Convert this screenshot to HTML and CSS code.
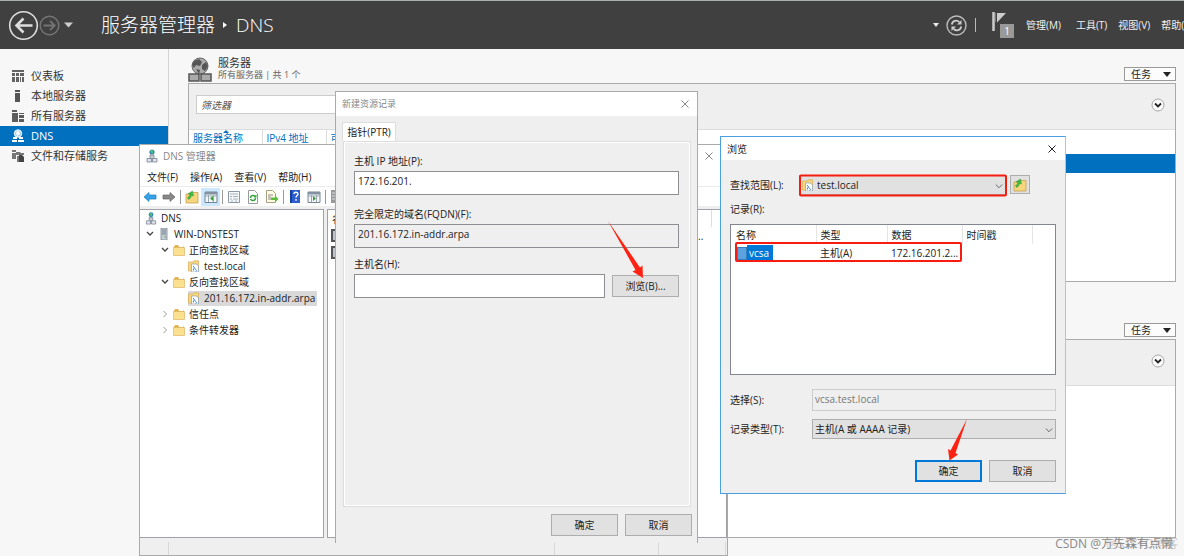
FILE: index.html
```html
<!DOCTYPE html>
<html lang="zh-CN">
<head>
<meta charset="utf-8">
<title>服务器管理器 - DNS</title>
<link rel="stylesheet" href="styles.css">
</head>
<body>
<svg class="defs" aria-hidden="true">
  <defs>
    <symbol id="folder" viewBox="0 0 12 12"><path d="M1 2.5V11h10V2.5H6L5 1H2z" fill="#e2b454"/><path d="M0.5 3.500H11.5V11.5H0.5z" fill="#fbe08f" stroke="#dcb566" stroke-width=".7"/><path d="M6 2.5h4" stroke="#fff" /></symbol>
    <symbol id="zone" viewBox="0 0 12 12"><path d="M.5 2H5L6 .8h4.500V11H.5z" fill="#f6d77f" stroke="#d5ac57" stroke-width=".7"/><path d="M3.500 4h5l2 2v6h-7z" fill="#fff" stroke="#8a9db0" stroke-width=".7"/><path d="M5 6.500c2 0 1 2 2 2.500s2 1 1 2.500M5.500 8.500v2" fill="none" stroke="#3c86cc" stroke-width="1"/></symbol>
    <symbol id="dns" viewBox="0 0 12 14"><circle cx="6" cy="3" r="2.600" fill="#3589b8"/><path d="M4.200 2.200c1-2 3-1 2.600 0s1 1.800-.4 2.600z" fill="#55c56b"/><path d="M4 6h4v3.500H4z" fill="#c9ced6" stroke="#788391" stroke-width=".8"/><path d="M1 9.500h4.500V13H1zM6.500 9.500H11V13H6.500z" fill="#dfe3e9" stroke="#758294" stroke-width=".8"/></symbol>
    <symbol id="up" viewBox="0 0 14 14"><path d="M1 4h6l1-1.500h5V13H1z" fill="#f5d67d" stroke="#c99e4c" stroke-width=".8"/><path d="M3.500 9.500C5 9 6 7.500 6.500 5.500L8.500 6 7.500 1 3 3.800l1.800.6C4.500 6 3.500 7 2.500 7.500z" fill="#42b844" stroke="#278d2b" stroke-width=".4"/></symbol>
    <symbol id="pane" viewBox="0 0 14 14"><path d="M1 2h12v10.500H1z" fill="#f4f7f9" stroke="#758593"/><path d="M1 2h12v2.500H1z" fill="#8292a1"/><path d="M4.500 5v7M9.500 5v7M1 6h12" stroke="#9ba7b2"/></symbol>
    <symbol id="close" viewBox="0 0 10 10"><path d="M1.500 1.500l7 7m0-7l-7 7" stroke="currentColor" fill="none"/></symbol>
    <symbol id="open" viewBox="0 0 8 8"><path d="M1 2l3 3 3-3" stroke="#444" stroke-width="1.300" fill="none"/></symbol>
    <symbol id="drop" viewBox="0 0 8 8"><path d="M.8 2.500L4 5.700l3.200-3.200" stroke="#666" fill="none"/></symbol>
    <symbol id="shut" viewBox="0 0 8 8"><path d="M2.500 1l3 3-3 3" stroke="#999" fill="none"/></symbol>
    <symbol id="round" viewBox="0 0 14 14"><circle cx="7" cy="7" r="6" fill="#fcfcfc" stroke="#929292" stroke-width=".8"/><path d="M4 5.500l3 3 3-3" stroke="#222" stroke-width="1.800" fill="none"/></symbol>
  </defs>
</svg>

<header class="topbar">
  <button class="plain" aria-label="后退"><svg width="31" height="31" viewBox="0 0 31 31"><circle cx="15.500" cy="15.500" r="13.800" fill="none" stroke="#ddd" stroke-width="1.600"/><path d="M24.500 15.500H8.500M15.500 8.500l-7 7 7 7" fill="none" stroke="#ddd" stroke-width="2.600"/></svg></button>
  <button class="plain" aria-label="前进"><svg width="21" height="21" viewBox="0 0 21 21"><circle cx="10.500" cy="10.500" r="9.300" fill="none" stroke="#747474" stroke-width="1.500"/><path d="M4.500 10.500H15M11 5.800l4.700 4.700-4.700 4.700" fill="none" stroke="#747474" stroke-width="1.800"/></svg></button>
  <button class="plain history" aria-label="历史"><svg width="9" height="6" viewBox="0 0 9 6"><path d="M0 .5h9L4.500 5.500z" fill="#ccc"/></svg></button>
  <h1>服务器管理器<svg width="5" height="8" viewBox="0 0 5 8"><path d="M0 1l4 3-4 3z" fill="#fff"/></svg>DNS</h1>
  <div class="tools">
    <svg width="6" height="4" viewBox="0 0 6 4"><path d="M0 0h6L3 4z" fill="#eee"/></svg>
    <button class="plain refresh" aria-label="刷新"><svg width="21" height="21" viewBox="0 0 21 21"><circle cx="10.500" cy="10.500" r="9.500" fill="none" stroke="#bbb" stroke-width="1.400"/><path d="M5.800 9.500c.7-4 5-5 7.500-2.500M15.200 11.500c-.7 4-5 5-7.500 2.500" fill="none" stroke="#ccc" stroke-width="1.800"/><path d="M15.500 5v4.500H11zM5.500 16v-4.500H10z" fill="#ccc"/></svg></button>
    <i class="rule"></i>
    <button class="plain flag" aria-label="通知"><svg width="15" height="20" viewBox="0 0 15 20"><path d="M1.500 0v19" stroke="#ccc" stroke-width="2.500"/><path d="M3 1h11L5 10.500V1" fill="#ccc"/><path d="M3.500 1v9" stroke="#777"/></svg><b>1</b></button>
    <button class="plain m1">管理(M)</button><button class="plain m2">工具(T)</button><button class="plain m3">视图(V)</button><button class="plain m3">帮助(H)</button>
  </div>
</header>

<div class="app">
  <nav class="sidebar">
    <a href="#"><svg width="14" height="14" viewBox="0 0 14 14"><path d="M1 1h12v2H1zM1 4h3v3H1zM5 4h3v3H5zM9 4h4v3H9zM1 8h3v5H1zM5 8h3v5H5zM9 8h1v5H9zM11 8h2v5h-2z" fill="#636363"/></svg>仪表板</a>
    <a href="#"><svg width="14" height="14" viewBox="0 0 14 14"><path d="M4 1h5v2H4zM4 4h5v9H4z" fill="#555"/></svg>本地服务器</a>
    <a href="#"><svg width="14" height="14" viewBox="0 0 14 14"><path d="M1 1h5v2H1zM1 4h6v9H1zM8 4h5v1H8zM8 6h5v3H8zM8 10h5v3H8z" fill="#5d5d5d"/></svg>所有服务器</a>
    <a href="#" class="on"><svg width="14" height="14" viewBox="0 0 14 14"><circle cx="7" cy="4.500" r="3.700" fill="#a8d0ee" stroke="#fff"/><path d="M5 3l3-1 1 3-3 2zM2 8h4v2H2zM8 8h4v2H8zM1 11h5v2H1zM7 11h6v2H7z" fill="#fff"/></svg>DNS</a>
    <a href="#"><svg width="14" height="14" viewBox="0 0 14 14"><path d="M1 1h4v2H1zM1 4h4v6H1zM5 3h4l1 1h3v2H5zM6 7h3v6H6z" fill="#777"/><path d="M8 6h3l2 2v5H8z" fill="#444"/></svg>文件和存储服务</a>
  </nav>
  <main class="main">
    <section class="tile">
      <div class="tile-head">
        <svg width="24" height="26" viewBox="0 0 24 26"><circle cx="12" cy="9" r="8" fill="#aaa" stroke="#666"/><path d="M6 4l5-2 3 3-2 4-4-1-2 3-2-3zM14 8l4-3 2 4-3 5-3-2zM8 12l4 1-1 4z" fill="#555"/><path d="M1 17h10v7H1zM13 17h10v7H13z" fill="#aaa" stroke="#555" stroke-width="1.500"/></svg>
        <div class="tile-title"><h2>服务器</h2><p>所有服务器 | 共 1 个</p></div>
        <button class="task">任务<svg width="8" height="5" viewBox="0 0 8 5"><path d="M0 0h8L4 5z" fill="#222"/></svg></button>
      </div>
      <div class="box">
        <div class="filter"><input type="text" placeholder="筛选器" aria-label="筛选器"><button class="plain" aria-label="展开"><svg width="14" height="14"><use href="#round"/></svg></button></div>
        <table class="servers">
          <thead><tr><th>服务器名称<svg width="6" height="3" viewBox="0 0 6 3"><path d="M0 3h6L3 0z" fill="#0070bf"/></svg></th><th>IPv4 地址</th><th>可</th></tr></thead>
          <tbody><tr><td colspan="3"></td></tr></tbody>
        </table>
      </div>
    </section>
    <section class="tile second">
      <div class="tile-head"><button class="task">任务<svg width="8" height="5" viewBox="0 0 8 5"><path d="M0 0h8L4 5z" fill="#222"/></svg></button></div>
      <div class="box"><div class="filter"><button class="plain" aria-label="展开"><svg width="14" height="14"><use href="#round"/></svg></button></div></div>
    </section>
  </main>
</div>

<section class="win manager">
  <div class="caption"><svg width="12" height="14"><use href="#dns"/></svg><span>DNS 管理器</span><button class="plain x" aria-label="关闭"><svg width="10" height="10"><use href="#close"/></svg></button></div>
  <div class="menu"><button class="plain">文件(F)</button><button class="plain">操作(A)</button><button class="plain">查看(V)</button><button class="plain">帮助(H)</button></div>
  <div class="toolbar">
    <button class="plain" aria-label="后退"><svg width="14" height="14" viewBox="0 0 14 14"><path d="M1 7l5-4.500V5h7v4H6v2.500z" fill="#35a3e8" stroke="#2479b5" stroke-width=".7"/></svg></button>
    <button class="plain" aria-label="前进"><svg width="14" height="14" viewBox="0 0 14 14"><path d="M13 7L8 2.500V5H1v4h7v2.500z" fill="#888" stroke="#666" stroke-width=".7"/></svg></button>
    <i></i>
    <button class="plain" aria-label="向上"><svg width="14" height="14"><use href="#up"/></svg></button>
    <button class="plain active" aria-label="显示树"><svg width="14" height="14"><use href="#pane"/><path d="M9 6v5L6 8.500z" fill="#3a9b3a"/></svg></button>
    <i></i>
    <button class="plain" aria-label="属性"><svg width="14" height="14" viewBox="0 0 14 14"><path d="M1.500 1.500h11v11h-11z" fill="#f8f8f8" stroke="#8b98a5"/><path d="M3 4h8M3 6.500h2m1 0h5M3 9h2m1 0h5M4 11h2m2 0h2" stroke="#a3b0bd"/></svg></button>
    <button class="plain" aria-label="刷新"><svg width="14" height="14" viewBox="0 0 14 14"><path d="M2.500.5h6l3 3v10h-9z" fill="#fff" stroke="#9a9a9a"/><path d="M4.500 8c0-3 4-3.500 5-1M9.500 8c0 3-4 3.500-5 1" fill="none" stroke="#34a23a" stroke-width="1.500"/><path d="M10.500 4.500v3H7.500z" fill="#34a23a"/></svg></button>
    <button class="plain" aria-label="导出"><svg width="14" height="14" viewBox="0 0 14 14"><path d="M1.500.5h6l3 3v9h-9z" fill="#fffbe3" stroke="#a4a080"/><path d="M3 5h5M3 7h3M3 9h3" stroke="#8a8a8a"/><path d="M6 7.500h4V5.500L13.500 9 10 12.500V10H6z" fill="#5abe3a"/></svg></button>
    <i></i>
    <button class="plain" aria-label="帮助"><svg width="12" height="13" viewBox="0 0 12 13"><path d="M1 0h10v13H1z" fill="#2c5ed0"/><path d="M1 0h2v13H1z" fill="#173f9a"/><path d="M5 4c0-2.500 4-2 4 0 0 1.500-2 1.500-2 3.500M7 9v1.700" stroke="#fff" stroke-width="1.400" fill="none"/></svg></button>
    <button class="plain" aria-label="操作窗格"><svg width="14" height="14"><use href="#pane"/><path d="M6 6v5l3-2.500z" fill="#3a9b3a"/></svg></button>
    <i></i>
    <button class="plain end" aria-label="服务器"><svg width="6" height="13" viewBox="0 0 6 13"><path d="M0 0h6v13H0z" fill="#999"/><path d="M1 3h4M1 6h4M1 9h4" stroke="#ddd"/></svg></button>
  </div>
  <div class="panes">
    <ul class="tree">
      <li class="l0"><svg width="12" height="13"><use href="#dns"/></svg>DNS</li>
      <li class="l1"><svg width="8" height="8"><use href="#open"/></svg><svg width="12" height="12" viewBox="0 0 12 12"><path d="M3 0h6v12H3z" fill="#c5ccd2" stroke="#7a8790" stroke-width=".8"/><path d="M4 2h4M4 4h4M4 6h4" stroke="#71808d"/><path d="M6.500 9h1.500" stroke="#49a253"/></svg>WIN-DNSTEST</li>
      <li class="l2"><svg width="8" height="8"><use href="#open"/></svg><svg width="12" height="12"><use href="#folder"/></svg>正向查找区域</li>
      <li class="l3"><svg width="12" height="12"><use href="#zone"/></svg>test.local</li>
      <li class="l2"><svg width="8" height="8"><use href="#open"/></svg><svg width="12" height="12"><use href="#folder"/></svg>反向查找区域</li>
      <li class="l3"><span class="sel"><svg width="12" height="12"><use href="#zone"/></svg>201.16.172.in-addr.arpa</span></li>
      <li class="l2"><svg width="8" height="8"><use href="#shut"/></svg><svg width="12" height="12"><use href="#folder"/></svg>信任点</li>
      <li class="l2"><svg width="8" height="8"><use href="#shut"/></svg><svg width="12" height="12"><use href="#folder"/></svg>条件转发器</li>
    </ul>
    <div class="list">
      <table><thead><tr><th>名称</th><th class="last"></th><th></th></tr></thead>
      <tbody><tr><td><i></i></td><td>..</td><td></td></tr><tr><td><i></i></td><td></td><td></td></tr></tbody></table>
    </div>
  </div>
  <div class="status"><i></i><i></i><i></i><i></i></div>
</section>

<section class="win record">
  <div class="caption"><span>新建资源记录</span><button class="plain x" aria-label="关闭"><svg width="10" height="10"><use href="#close"/></svg></button></div>
  <button class="tab">指针(PTR)</button>
  <form class="page">
    <label for="ip">主机 IP 地址(P):</label>
    <input id="ip" type="text" value="172.16.201.">
    <label for="fqdn">完全限定的域名(FQDN)(F):</label>
    <input id="fqdn" type="text" value="201.16.172.in-addr.arpa" readonly>
    <label for="host">主机名(H):</label>
    <div class="pick"><input id="host" type="text"><button type="button" class="btn">浏览(B)...</button></div>
  </form>
  <div class="actions"><button class="btn">确定</button><button class="btn">取消</button></div>
</section>

<section class="win browse">
  <div class="caption"><span>浏览</span><button class="plain x" aria-label="关闭"><svg width="10" height="10"><use href="#close"/></svg></button></div>
  <div class="body">
    <div class="scope">
      <label for="scope">查找范围(L):</label>
      <div class="combo icon"><svg class="lead" width="12" height="12"><use href="#zone"/></svg><select id="scope"><option>test.local</option></select><svg class="arrow" width="8" height="8"><use href="#drop"/></svg></div>
      <button class="btn small" aria-label="向上"><svg width="14" height="14"><use href="#up"/></svg></button>
    </div>
    <p class="caption-label">记录(R):</p>
    <div class="records">
      <table>
        <thead><tr><th>名称</th><th>类型</th><th>数据</th><th>时间戳</th><th></th></tr></thead>
        <tbody><tr><td class="name"><i></i><span>vcsa</span></td><td>主机(A)</td><td>172.16.201.2...</td><td></td><td></td></tr></tbody>
      </table>
    </div>
    <div class="field"><label for="choice">选择(S):</label><input id="choice" type="text" value="vcsa.test.local" disabled></div>
    <div class="field"><label for="type">记录类型(T):</label><div class="combo"><select id="type"><option>主机(A 或 AAAA 记录)</option></select><svg class="arrow" width="8" height="8"><use href="#drop"/></svg></div></div>
    <div class="actions"><button class="btn primary">确定</button><button class="btn">取消</button></div>
  </div>
</section>

<svg class="marks" width="1184" height="556" viewBox="0 0 1184 556" aria-hidden="true">
  <g fill="none" stroke="#f81c10" stroke-width="2"><rect x="800" y="175.500" width="206" height="20" rx="1"/><rect x="736" y="243" width="225" height="18" rx="1"/></g>
  <g fill="#ff2212"><path d="M608 221L640 267.500 642.500 265.500 643 278 632.500 271.500 635.500 270z"/><path d="M967 419L955.500 453 958 454.500 949.500 460.500 948 449 950.500 450.500z"/></g>
</svg>
<div class="watermark"><span class="ghost">@51CTO博客</span><span>CSDN @方先森有点懒</span></div>
</body>
</html>
```

FILE: styles.css
```css
* { box-sizing: border-box; }
body {
  margin: 0; position: relative; min-height: 100vh; overflow: hidden;
  display: flex; flex-direction: column; background: #f7f7f7; color: #222;
  font: 10px/14px "Open Sans", "Noto Sans CJK SC", sans-serif;
}
h1, h2, p, ul { margin: 0; padding: 0; font-weight: 400; }
ul { list-style: none; }
svg { display: block; flex: none; }
button, input, select { font: inherit; color: inherit; margin: 0; }
table { border-collapse: collapse; table-layout: fixed; width: 100%; }
th, td { font-weight: 400; text-align: left; padding: 0; white-space: nowrap; }
.defs { position: absolute; width: 0; height: 0; }
.plain { background: none; border: 0; padding: 0; display: flex; align-items: center; justify-content: center; white-space: nowrap; }

.topbar { display: flex; align-items: center; height: 49px; flex: none; padding-left: 8px; background: #404040; border-top: 1px solid #aab0b0; color: #f2f2f2; }
.history { margin-left: 4px; }
h1 { display: flex; align-items: center; gap: 8px; margin-left: 28px; font-size: 19px; line-height: 28px; font-weight: 300; color: #fff; white-space: nowrap; }
.tools { display: flex; align-items: center; margin-left: auto; width: 251px; flex: none; }
.tools > * { flex: none; }
.refresh { margin-left: 7px; }
.rule { width: 1px; height: 14px; background: #bbb; margin: 0 16px 0 8px; }
.flag { align-items: flex-start; height: 26px; position: relative; width: 22px; justify-content: flex-start; }
.flag b { position: absolute; right: 0; bottom: 0; width: 14px; height: 14px; background: #999; color: #fff; font-weight: 400; text-align: center; }
.m1 { margin-left: 12px; }
.m2 { margin-left: 15px; }
.m3 { margin-left: 11px; }

.app { display: flex; flex: 1; }
.sidebar { width: 169px; flex: none; padding-top: 17px; border-right: 1px solid #d4d4d4; }
.sidebar a { display: flex; align-items: center; gap: 6px; height: 20px; padding-left: 11px; font-size: 11px; color: #333; text-decoration: none; }
.sidebar .on { background: #0070bf; color: #fff; }
.main { flex: 1; padding: 7px 8px 0 19px; }
.tile-head { display: flex; align-items: flex-end; height: 27px; gap: 6px; }
.tile-title { padding-bottom: 2px; }
h2 { font-size: 11px; line-height: 13px; color: #333; }
.tile-head p { font-size: 9px; line-height: 12px; color: #666; }
.task { display: flex; align-items: center; gap: 12px; height: 14px; width: 52px; padding: 0 5px 0 6px; margin: 0 0 2px auto; background: #fcfcfc; border: 1px solid #999; white-space: nowrap; }
.tile-head .task { flex: none; }
.box { height: 199px; background: #fff; border: 1px solid #aaa; }
.filter { display: flex; align-items: center; height: 46px; padding: 0 10px 4px 7px; background: #efefef; border-bottom: 1px solid #ddd; }
.filter input { width: 420px; height: 19px; border: 1px solid #ccc; padding: 0 4px; font-style: italic; background: #fff; }
.filter input::placeholder { color: #555; }
.filter button { margin-left: auto; }
.second { margin-top: 30px; }
.servers th { height: 24px; vertical-align: top; padding: 1px 4px 0; color: #0070bf; border-right: 1px solid #ddd; position: relative; }
.servers th:last-child { border: 0; }
.servers th:nth-child(1) { width: 73px; }
.servers th:nth-child(2) { width: 64px; }
.servers th svg { position: absolute; left: 34px; top: 0; }
.servers td { height: 19px; background: #0070bf; }

.win { position: absolute; display: flex; flex-direction: column; background: #efefef; border: 1px solid #aaa; }
.caption { display: flex; align-items: center; gap: 6px; height: 24px; flex: none; padding: 0 7px; background: #fff; color: #888; }
.x { margin-left: auto; }
.btn { display: flex; align-items: center; justify-content: center; width: 67px; height: 22px; padding: 0; background: #e1e1e1; border: 1px solid #adadad; flex: none; }
.actions { display: flex; justify-content: flex-end; gap: 7px; }

.manager { left: 139px; top: 144px; width: 589px; height: 412px; }
.manager .caption { height: 22px; gap: 5px; padding: 0 13px 0 6px; }
.menu { display: flex; gap: 12px; padding: 2px 7px 0; height: 19px; background: #fff; }
.menu button { height: 16px; }
.toolbar { display: flex; align-items: center; height: 20px; background: #fff; border-top: 1px solid #ececec; }
.toolbar button { width: 19px; height: 18px; flex: none; }
.toolbar .end { width: 14px; }
.toolbar .active { background: #cce8ff; }
.toolbar i { width: 1px; height: 14px; margin: 0 1px 0 2px; background: #999; flex: none; }
.panes { display: flex; gap: 3px; flex: 1; margin-top: 3px; }
.tree { width: 184px; flex: none; background: #fff; border: 1px solid #a0a0a8; border-left: 0; }
.tree li { display: flex; align-items: center; gap: 4px; height: 16px; white-space: nowrap; }
.l0 { padding-left: 5px; }
.tree .l1 { padding-left: 6px; gap: 4px; }
.l2 { padding-left: 21px; }
.l3 { padding-left: 48px; }
.sel { display: flex; align-items: center; gap: 4px; height: 15px; padding-right: 2px; background: #d9d9d9; }
.list { flex: 1; background: #fff; border: 1px solid #a0a0a8; }
.list th, .list td { height: 17px; }
.list th { padding-left: 4px; }
.list th:first-child { width: 370px; }
.list .last { width: 13px; padding: 0; border-right: 1px solid #ddd; }
.list td i { display: block; width: 12px; height: 13px; margin-left: 3px; border: 2px solid #555; background: #bbc4cc; }
.status { display: grid; grid-template-columns: 29px 386px 104px 67px; height: 17px; flex: none; }
.status i { border-right: 1px solid #d9d9d9; margin-top: 4px; }

.record { left: 335px; top: 91px; width: 363px; height: 452px; border-bottom: 0; }
.record .caption { padding: 0 7px 0 6px; font-size: 9px; }
.tab { align-self: flex-start; margin: 6px 0 0 6px; width: 54px; height: 19px; padding: 0; background: #fff; border: 1px solid #ddd; border-bottom: 0; white-space: nowrap; }
.page { display: flex; flex-direction: column; flex: 1; margin: 0 6px 0 7px; padding: 12px 11px 0 10px; border: 1px solid #ddd; box-shadow: inset 1px 1px #fff, inset -1px -1px #fff; }
.page > label { line-height: 14px; padding-bottom: 3px; }
.page input { width: 100%; height: 24px; padding: 0 3px 5px; background: #fff; border: 1px solid #8e8e92; }
.page input[readonly] { background: #efefef; }
.page > input { margin-bottom: 12px; }
.page > input[readonly] { margin-bottom: 9px; }
.pick { display: flex; align-items: center; gap: 7px; }
.pick input { flex: 1; min-width: 0; }
.record .actions { padding: 7px 5px; }

.browse { left: 720px; top: 136px; width: 346px; height: 358px; border-color: #4a9fe0; border-right-color: #9acbef; }
.browse .caption { height: 23px; padding: 0 8px 0 6px; color: #222; }
.body { padding: 14px 9px 0; }
.scope { display: flex; align-items: center; height: 21px; }
.scope label { width: 69px; }
.combo { position: relative; flex: 1; }
.scope .combo { flex: none; width: 207px; margin-right: 4px; }
.combo select { display: block; width: 100%; height: 20px; padding: 0 2px; appearance: none; border: 1px solid #adadad; border-radius: 0; background: #e1e1e1; }
.combo.icon select { padding-left: 17px; }
.lead { position: absolute; left: 3px; top: 4px; }
.arrow { position: absolute; right: 3px; top: 7px; pointer-events: none; }
.small { width: 20px; height: 19px; }
.caption-label { margin: 7px 0 8px; }
.records { height: 151px; background: #fff; border: 1px solid #82868f; }
.records th { height: 19px; padding: 0 4px; border-right: 1px solid #e5e5e5; }
.records th:first-child { padding-left: 5px; }
.records th:last-child { border: 0; }
.records th:nth-child(1) { width: 85px; }
.records th:nth-child(2) { width: 71px; }
.records th:nth-child(3) { width: 75px; }
.records th:nth-child(4) { width: 70px; }
.records td { height: 18px; padding: 0 4px; }
.records .name { display: flex; align-items: center; padding: 0 0 0 6px; }
.name i { width: 10px; height: 13px; background: #5ba2df; border: 1px solid #337dbd; }
.name span { padding: 0 4px 0 2px; line-height: 16px; background: #0078d7; color: #fff; }
.field { display: flex; align-items: center; margin-top: 14px; }
.field + .field { margin-top: 8px; }
.field label { width: 82px; flex: none; }
.field input { flex: 1; min-width: 0; height: 22px; padding: 0 2px 3px; border: 1px solid #ccc; background: #efefef; color: #777; }
.body .actions { margin-top: 21px; }
.primary { border: 2px solid #0078d7; }

.marks { position: absolute; left: 0; top: 0; pointer-events: none; }
.watermark { position: absolute; right: 11px; bottom: 4px; font-size: 12px; line-height: 16px; color: #888; white-space: nowrap; }
.ghost { position: absolute; right: -5px; top: 0; color: #ccc; }
.watermark span:last-child { position: relative; }
```
